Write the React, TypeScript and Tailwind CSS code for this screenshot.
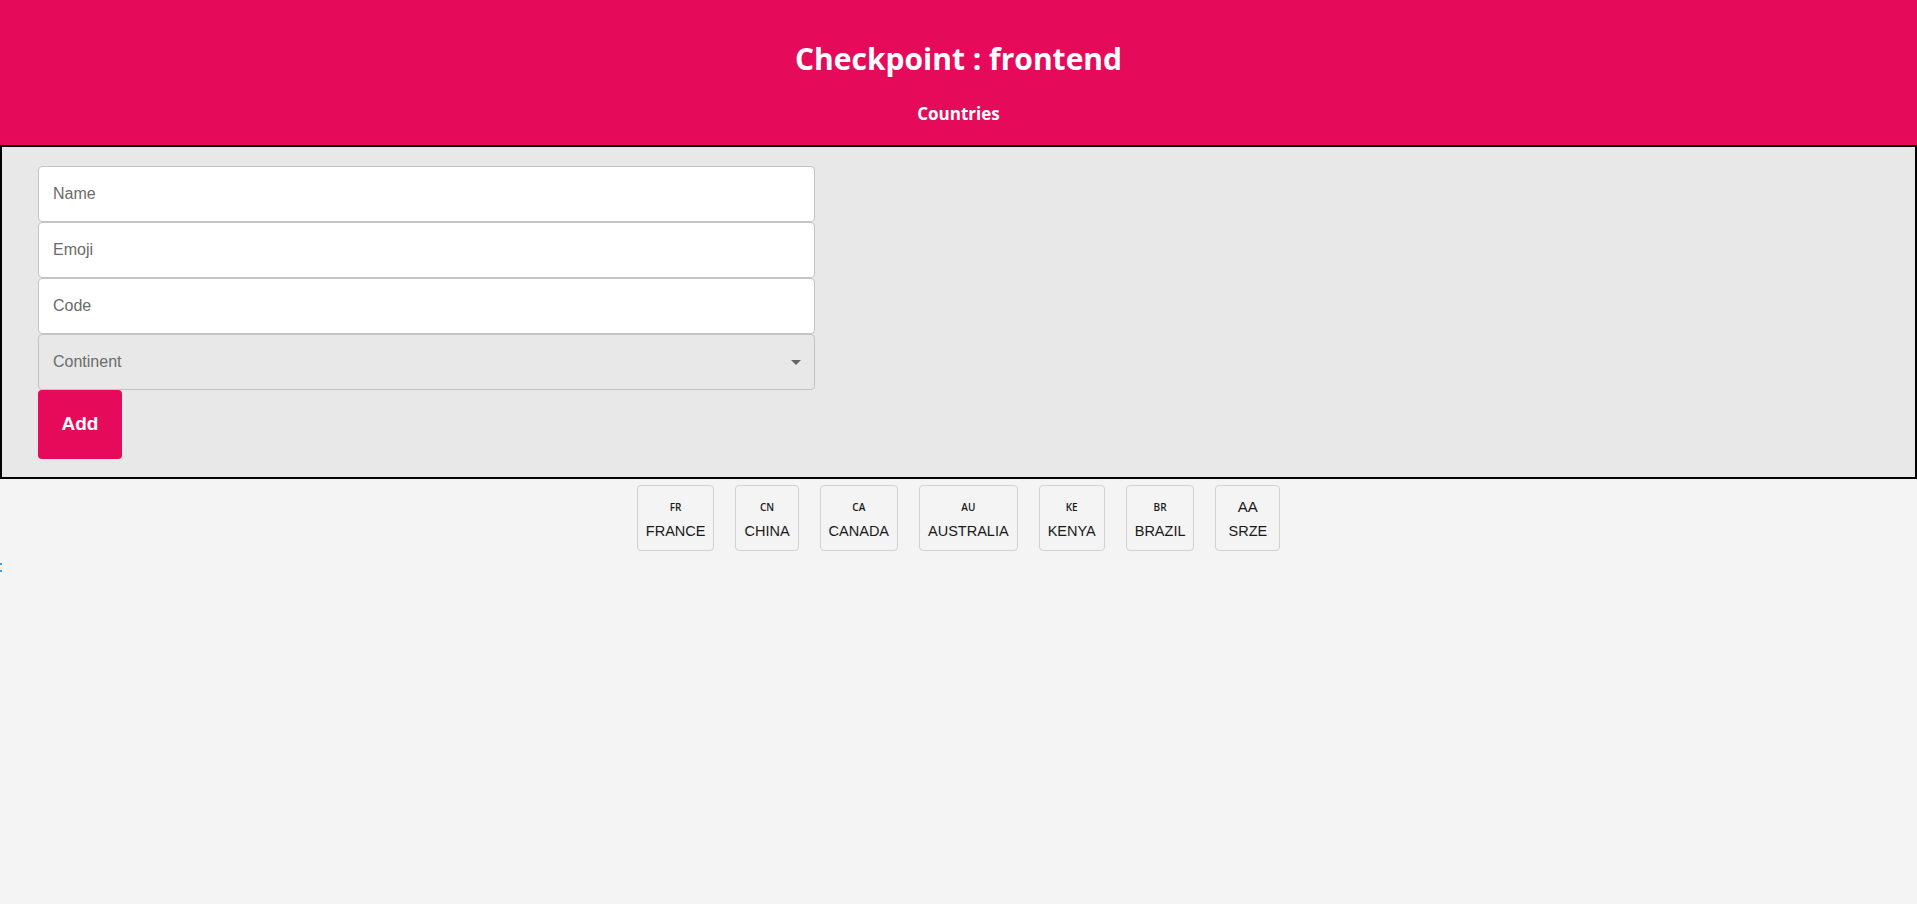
const countries = [
  { code: "FR", name: "FRANCE" },
  { code: "CN", name: "CHINA" },
  { code: "CA", name: "CANADA" },
  { code: "AU", name: "AUSTRALIA" },
  { code: "KE", name: "KENYA" },
  { code: "BR", name: "BRAZIL" },
  { code: "AA", name: "SRZE", plain: true },
];

const fields = ["Name", "Emoji", "Code"];

export default function App() {
  return (
    <div className="min-h-[904px] bg-[#f4f4f4] font-['Liberation_Sans',Arial,sans-serif]">
      <header className="flex h-[145px] flex-col items-center bg-[#e60b5a] pt-[39px] text-white">
        <h1 className="font-['Open_Sans',sans-serif] text-[30px] font-bold leading-[40px]">
          Checkpoint : frontend
        </h1>
        <h2 className="mt-[23px] font-['Open_Sans',sans-serif] text-[17px] font-bold leading-[24px]">
          Countries
        </h2>
      </header>

      <section className="border-2 border-black bg-[#e8e8e8] px-[36px] pb-[18px] pt-[19px]">
        <form className="flex w-[777px] flex-col" onSubmit={(e) => e.preventDefault()}>
          {fields.map((label) => (
            <input
              key={label}
              placeholder={label}
              className="box-content h-[46px] rounded-[4px] border border-[#c4c4c4] bg-white px-[14px] py-[4px] text-[16px] text-[#222] outline-none placeholder:text-[#6b6b6b]"
            />
          ))}
          <div className="flex h-[56px] items-center justify-between rounded-[4px] border border-[#c4c4c4] pl-[14px] pr-[12px] text-[16px] text-[#6b6b6b]">
            <span>Continent</span>
            <svg width="10" height="5" viewBox="0 0 10 5" className="mr-[1px]">
              <path d="M0 0h10L5 5z" fill="#666" />
            </svg>
          </div>
          <button
            type="submit"
            className="h-[69px] w-[84px] rounded-[4px] bg-[#e60b5a] text-[19px] font-bold text-white"
          >
            Add
          </button>
        </form>
      </section>

      <div className="relative">
        <div className="absolute left-0 top-[84px] h-[2px] w-[2px] bg-[#3b9be8]" />
        <div className="absolute left-0 top-[91px] h-[2px] w-[2px] bg-[#3b9be8]" />
      </div>

      <ul className="mt-[6px] flex justify-center gap-[21px]">
        {countries.map((c) => (
          <li
            key={c.name}
            className={`flex h-[66px] flex-col items-center rounded-[4px] border border-[#d2d2d2] pt-[13px] text-[#1a1a1a] ${
              c.plain ? "px-[12px]" : "px-[8px]"
            }`}
          >
            {c.plain ? (
              <span className="text-[15px] leading-[16px]">{c.code}</span>
            ) : (
              <span className="font-['Open_Sans',sans-serif] text-[10px] font-semibold leading-[16px]">
                {c.code}
              </span>
            )}
            <span className="mt-[6px] text-[14.5px] leading-[20px]">{c.name}</span>
          </li>
        ))}
      </ul>
    </div>
  );
}
